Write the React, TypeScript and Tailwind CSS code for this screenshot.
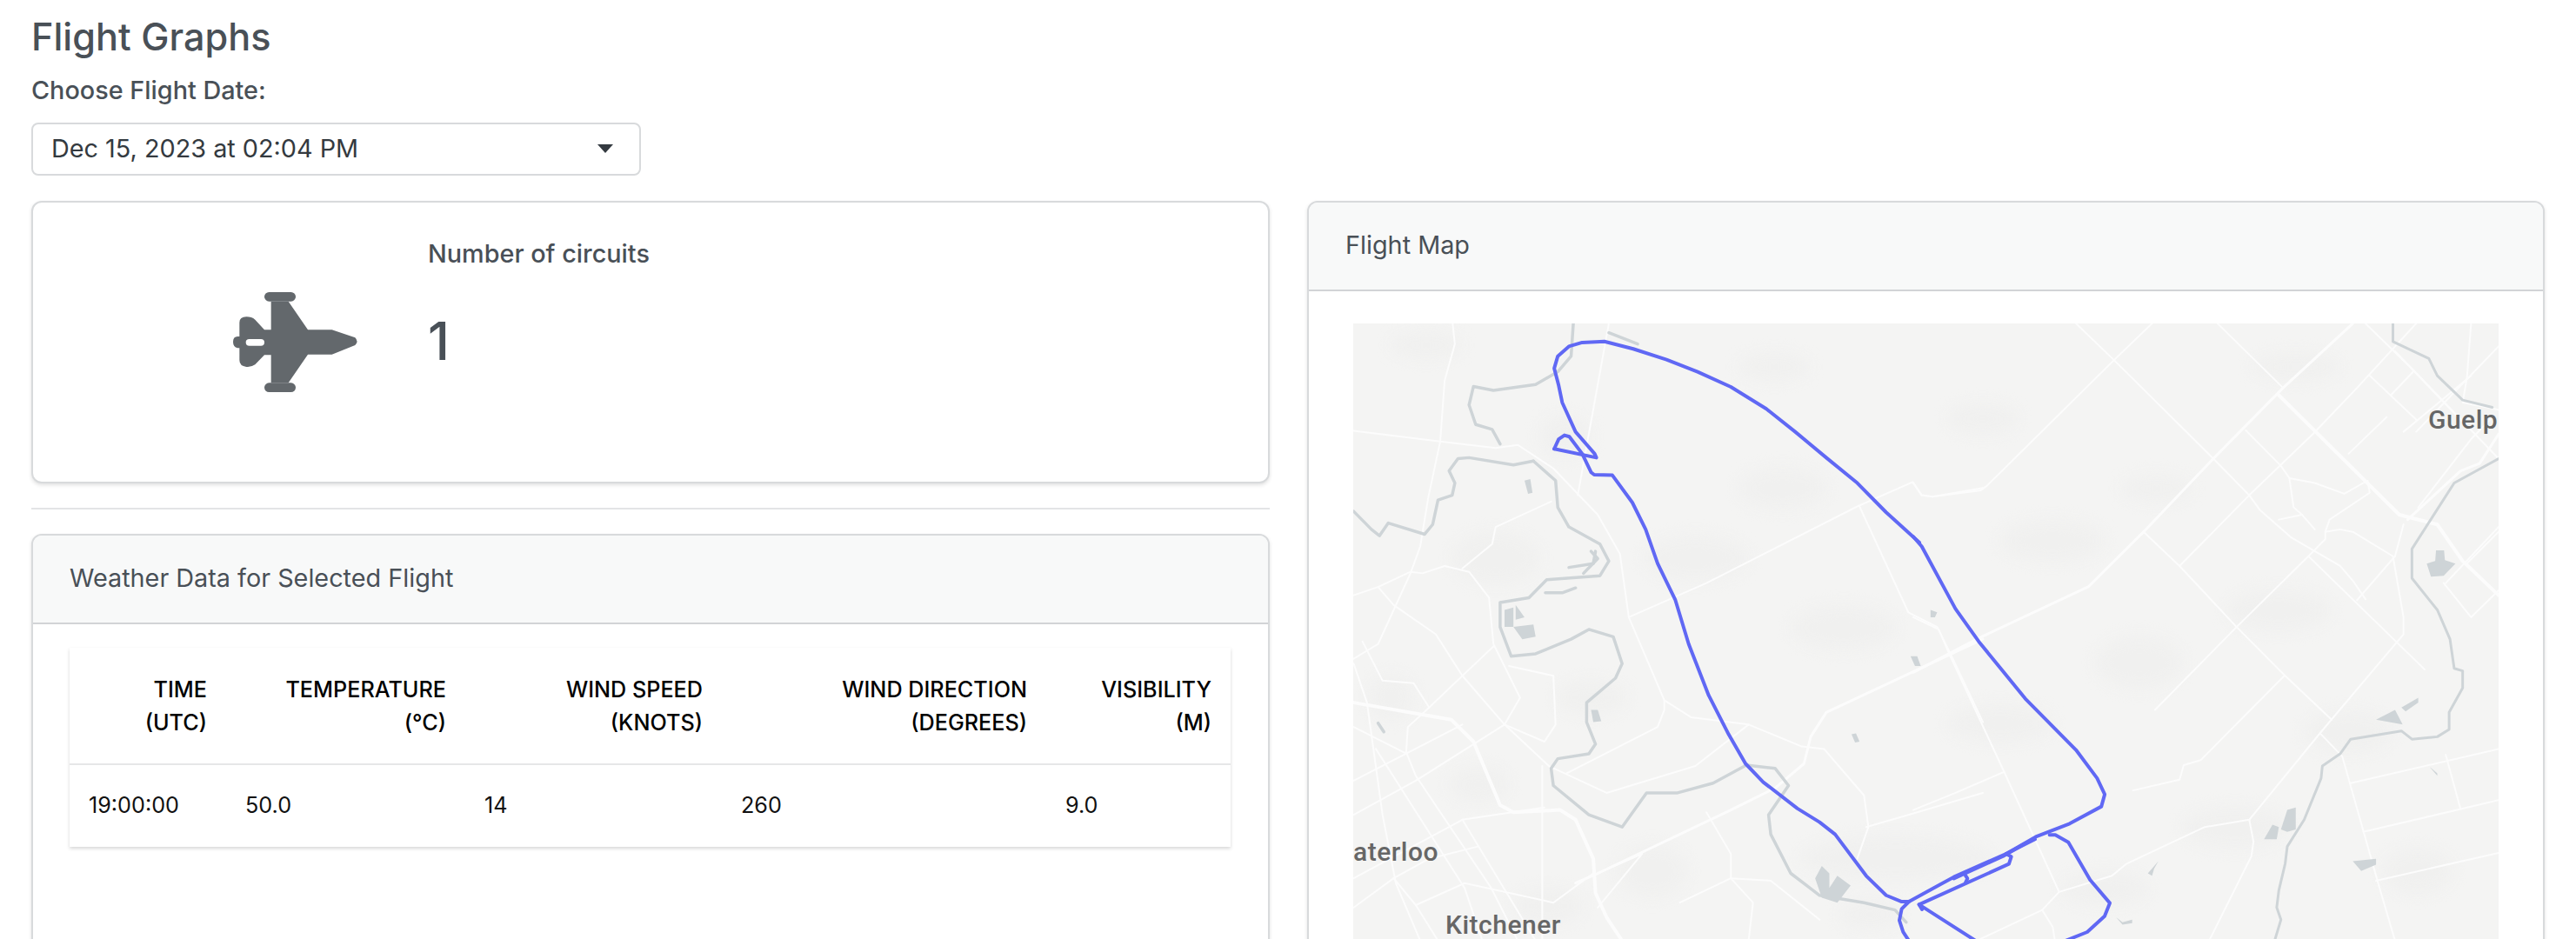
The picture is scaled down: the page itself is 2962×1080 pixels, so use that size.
import React from 'react';

// map data is traced in three different crops, each with its own scale
const Z4 = 'translate(1480 200) scale(0.5102 0.5612)';
const Z5 = 'translate(2200 200) scale(0.4859 0.5612)';
const Z8 = 'translate(2050 900) scale(0.3333 0.3333)';

const thinRoadsA = [
    '373,303 378,345 355,420 345,545 318,660 300,760 278,815 205,960 150,990',
    '150,523 345,545 470,558 520,552 600,600 700,695 750,775 770,905 850,1075 850,1095 835,1130 630,1225',
    '725,303 655,655',
    '595,668 470,720 462,755 395,805',
    '150,860 205,843 278,812 305,815 355,800 410,812 455,865 465,960 525,1070 490,1125 290,1240 150,1310',
    '205,843 240,880 335,940 395,1025 490,1125 590,1210 720,1265 920,1210 1040,1125 1160,1170 1210,1175 1300,1270 1310,1335 1285,1400',
    '770,905 945,835 1285,678 1410,628 1430,655 1455,658 1568,640',
    '1290,678 1400,895 1465,925 1495,980 1568,1120',
    '850,1075 910,1110 1040,1125',
    '465,965 395,1025 320,1090 272,1130 268,1185',
    '500,1005 600,1025 605,1125 580,1160 490,1125',
    '170,955 215,1035 285,1040 320,1090',
    '150,1000 180,1080 215,1310 245,1450 300,1568',
    '575,1210 575,1568',
    '150,1240 395,1125',
    '150,1440 395,1320 580,1295',
    '395,1320 560,1568',
    '945,1305 1000,1390 1000,1440 1050,1490 1040,1568',
    '150,1130 270,1185 290,1230 460,1460 520,1568',
    '200,1175 400,1460 440,1568',
    '240,1440 290,1495 400,1450 600,1490 690,1430',
    '290,1495 340,1568',
    '150,1500 240,1440 320,1400 430,1375',
    '650,1450 800,1390 700,1500',
    '1305,1335 1400,1310 1568,1265',
    '885,1490 1000,1440 1090,1445 1200,1525',
];

const wideRoadsA = [
    { pts: '1568,950 1215,1100 1180,1150 1165,1205 1100,1255 1000,1300 700,1430 650,1450', w: 3 },
    { pts: '150,1080 370,1115 420,1160 480,1290 510,1305 615,1300 650,1320 690,1400 695,1470 720,1520 755,1568', w: 4 },
];

const thinRoadsB = [
    '385,303 475,378 710,580 795,655 820,685 895,742 1010,800 1040,830 1070,868',
    '565,303 475,378 175,635 160,645 45,658 20,655 0,630',
    '720,303 875,435',
    '1070,303 1185,400 1385,580',
    '1190,303 1050,435 945,530 795,655 630,800',
    '545,730 630,800 765,925 880,1025 990,1115',
    '572,1095 765,925 935,780 975,745 975,730 1010,725 1040,730 1135,780 1160,905 1160,940 965,1140 795,1320 690,1335 505,1410 470,1435 345,1468 305,1505 150,1568',
    '935,780 1210,1012',
    '878,1025 680,1198 640,1208 630,1238 520,1260',
    '965,1145 1015,1190 1100,1450 1140,1568',
    '1035,1245 1385,1175',
    '1065,1345 1385,1280',
    '1095,1445 1385,1388',
    '1260,1187 1295,1298',
    '795,1320 805,1365 800,1395 700,1568',
    '0,1300 100,1265 215,1222',
    '0,905 60,930 85,980 215,1222 345,1468',
    '305,1505 330,1540 335,1568',
    '787,522 870,595 890,620 900,680 920,695 865,705',
    '890,620 950,630 1020,652 1075,625 1080,650 985,705 975,730',
    '920,695 950,725',
    '1320,303 1310,415 1300,465 1385,480',
    '1140,360 1300,505',
    '1080,410 1190,500',
    '1190,525 1385,350',
    '1130,450 1185,400',
    '1160,525 1320,410',
    '1195,680 1320,540 1365,500',
    '1385,860 1310,795 1385,730',
    '1255,835 1320,905 1385,850',
    '1140,780 1050,870',
    '1140,780 1160,715',
    '1260,835 1385,720',
    '1030,570 1120,495',
];

const wideRoadsB = [
    { pts: '1040,303 875,435 710,580 545,730 415,842 150,950 0,1018', w: 3 },
    { pts: '865,450 1150,695 1240,715 1300,790 1385,860', w: 4 },
    { pts: '1170,705 1295,605 1340,590 1385,530', w: 3 },
];

const riversA = [
    '645,303 640,370 610,402 560,428 465,440 420,432 410,470 425,510 462,520 480,550',
    '555,585 510,593 410,578 385,580 365,605 378,630 372,655 340,665 328,715 310,735 228,712 208,738 190,725 150,688',
    '555,585 605,625 610,680 635,720 705,755 725,790 705,820 585,828 545,865 480,875 480,925 505,985 560,980 640,950 680,930 735,945 755,1000 740,1030 675,1080 675,1120 695,1165 680,1185 610,1195 595,1215 600,1250 680,1310 755,1335 810,1265 880,1265 960,1245 1035,1208 1100,1215 1130,1250 1085,1310 1090,1350 1135,1430 1200,1475 1300,1490 1370,1505 1395,1530',
    '635,803 690,795 695,770',
    '668,815 700,785 685,770',
    '582,855 620,855 650,845',
    '725,322 790,345',
    '205,1122 218,1140',
];

const riversB = [
    '1135,303 1135,340 1220,375 1240,410 1300,460 1370,475',
    '1385,580 1280,630 1180,765 1180,825 1240,890 1270,950 1280,1010 1300,1015 1300,1050 1268,1100 1268,1135 1240,1150 1180,1155 1155,1138 1035,1155 1010,1185 968,1210 965,1235 925,1320 885,1375 880,1410 865,1465 860,1500 870,1525 855,1568',
];

const waterA = [
    '535,625 548,622 553,650 543,652',
    '490,890 510,885 510,925 490,925',
    '515,880 535,905 515,910',
    '510,925 555,920 560,945 530,950',
    '685,1095 700,1095 708,1118 690,1120',
    '1405,985 1420,985 1428,1005 1415,1005',
    '1272,1145 1282,1143 1290,1160 1280,1162',
    '1450,890 1465,895 1460,905 1450,905',
    '1190,1440 1205,1415 1222,1430 1222,1460 1240,1435 1270,1455 1240,1490 1205,1480',
];

const waterB = [
    '1215,795 1235,790 1237,768 1256,768 1258,788 1283,795 1255,820 1225,822',
    '870,1340 885,1300 905,1295 905,1340 885,1345',
    '830,1360 850,1330 865,1335 860,1360',
    '1095,1115 1140,1095 1158,1125',
    '1155,1090 1195,1070 1195,1080 1165,1098',
    '1040,1405 1095,1400 1095,1412 1060,1425',
    '555,1430 580,1405 570,1420 565,1435',
    '480,1520 495,1530 518,1525 518,1532 495,1535',
    '1222,1212 1240,1225 1240,1230',
];

// soft patches of darker land, x y rx ry in page pixels
const patches = [
    [1640, 395, 40, 16], [1800, 500, 30, 24], [1950, 640, 60, 26], [1720, 640, 50, 30], [1830, 800, 40, 20],
    [2050, 560, 50, 24], [2120, 720, 60, 26], [2280, 480, 40, 18], [2360, 620, 60, 24], [2480, 560, 40, 16],
    [2460, 760, 50, 30], [2300, 830, 60, 22], [2620, 700, 60, 24], [2700, 840, 50, 24], [2570, 950, 60, 24],
    [2180, 985, 110, 26], [1900, 1000, 40, 30], [1700, 900, 34, 20], [1600, 800, 26, 26], [2780, 1000, 40, 26],
    [2420, 1020, 50, 20], [2040, 420, 40, 16], [2640, 420, 50, 16], [1780, 1040, 40, 20], [2150, 1050, 34, 18],
];

const Line = ({ pts, t, w, color }: { pts: string; t: string; w: number; color: string }) => (
    <polyline
        points={pts}
        transform={t}
        fill="none"
        stroke={color}
        strokeWidth={w}
        strokeLinejoin="round"
        strokeLinecap="round"
        vectorEffect="non-scaling-stroke"
    />
);

const FlightMap = () => {
    const road = '#fcfcfc';
    const river = '#ced4d7';
    const track = '#6068f4';
    return (
        <svg viewBox="1556 370 1317 710" className="block w-[1317px] h-[710px] bg-[#f4f4f3]">
            <g className="blur-[8px]">
                {patches.map(([x, y, rx, ry], i) => (
                    <ellipse key={i} cx={x} cy={y} rx={rx} ry={ry} fill="#f0f0ef" />
                ))}
            </g>

            {thinRoadsA.map((p, i) => <Line key={i} pts={p} t={Z4} w={2} color={road} />)}
            {wideRoadsA.map((r, i) => <Line key={i} pts={r.pts} t={Z4} w={r.w} color={road} />)}
            {thinRoadsB.map((p, i) => <Line key={i} pts={p} t={Z5} w={2} color={road} />)}
            {wideRoadsB.map((r, i) => <Line key={i} pts={r.pts} t={Z5} w={r.w} color={road} />)}

            {riversA.map((p, i) => <Line key={i} pts={p} t={Z4} w={3.5} color={river} />)}
            {riversB.map((p, i) => <Line key={i} pts={p} t={Z5} w={3} color={river} />)}
            {waterA.map((p, i) => <polygon key={i} points={p} transform={Z4} fill={river} />)}
            {waterB.map((p, i) => <polygon key={i} points={p} transform={Z5} fill={river} />)}

            <g fill="#666666" fontFamily="Roboto, sans-serif" fontWeight={500} fontSize={30} letterSpacing={0.5}>
                <text x={1556} y={988}>aterloo</text>
                <text x={1662} y={1072}>Kitchener</text>
                <text x={2792} y={491}>Guelp</text>
            </g>

            {/* flight track */}
            <Line t={Z4} w={4} color={track} pts="602,560 612,540 625,532 636,535 665,570 685,608 692,613 733,614 778,670 808,725 835,795 875,870 905,960 950,1065 995,1145 1033,1205 1073,1243 1150,1297 1200,1325 1235,1350 1305,1435 1350,1475 1385,1488 1400,1488" />
            <Line t={Z4} w={4} color={track} pts="602,560 697,578 693,570 650,525 620,465 612,430 602,395 610,370 635,350 665,342 715,340 780,355 855,377 925,402 1000,433 1080,478 1145,525 1215,578 1285,630 1350,690 1425,752" />
            <Line t={Z5} w={4} color={track} pts="0,740 20,760 100,888 155,955 265,1072 385,1177 435,1235 453,1268 445,1293 370,1328 290,1355 220,1390" />
            <Line t={Z8} w={4} color={track} pts="435,405 590,320 770,240 870,190" />
            <Line t={Z8} w={4} color={track} pts="590,325 760,248 830,208" />
            <Line t={Z8} w={4} color={track} pts="435,405 410,430 402,470 415,510 435,540" />
            <Line t={Z8} w={4} color={track} pts="470,415 780,275 788,250 770,240" />
            <Line t={Z8} w={4} color={track} pts="630,315 637,325 630,340" />
            <Line t={Z8} w={4} color={track} pts="480,432 470,415 665,540" />
            <Line t={Z8} w={4} color={track} pts="920,175 940,175 985,200 1060,330 1128,410 1110,455 1050,510 975,540" />
        </svg>
    );
};

const JetIcon = () => (
    <svg viewBox="0 0 660 480" className="block w-[220px] h-[160px] shrink-0">
        <g fill="#63686c">
            <rect x="222" y="75" width="108" height="32" rx="16" />
            <rect x="222" y="388" width="108" height="32" rx="16" />
            <path
                fillRule="evenodd"
                d="M245 107H305L372 205H455L535 232Q548 245 535 258L455 290H372L305 388H245V292H222L190 325Q175 335 160 333Q136 330 136 310V268H130Q114 265 114 247Q114 228 130 228H136V180Q136 160 160 160Q178 160 190 170L222 205H245ZM170 237Q158 237 158 248Q158 260 170 260H210Q222 260 222 248Q222 237 210 237Z"
            />
        </g>
    </svg>
);

const cardClass = 'rounded-[12px] border-2 border-[#d8dadc] bg-white shadow-[0_2px_4px_rgba(0,0,0,0.12)]';
const cardHeaderClass = 'h-[102px] flex items-center pb-[2px] border-b-2 border-[#d2d4d6] bg-[#f8f9f9] rounded-t-[10px] text-[28.8px] text-[#495057]';

const headers = [
    { a: 'TIME', b: '(UTC)', w: 'w-[180px]' },
    { a: 'TEMPERATURE', b: '(°C)', w: 'w-[275px]' },
    { a: 'WIND SPEED', b: '(KNOTS)', w: 'w-[295px]' },
    { a: 'WIND DIRECTION', b: '(DEGREES)', w: 'w-[373px]' },
    { a: 'VISIBILITY', b: '(M)', w: 'w-[212px]' },
];

const cells = ['19:00:00', '50.0', '14', '260', '9.0'];

const App: React.FC = () => {
    return (
        <div className="h-[1080px] overflow-hidden bg-white px-[36px] font-['Inter',sans-serif]">
            <h1 className="pt-[18px] text-[43.2px] leading-[48px] font-medium text-[#495057]">Flight Graphs</h1>
            <p className="mt-[21px] text-[28.8px] leading-[34px] font-medium text-[#495057]">Choose Flight Date:</p>

            {/* date select */}
            <div className="mt-[20px] flex h-[61px] w-[701px] items-center justify-between rounded-[8px] border-2 border-[#d8dadc] pb-[2px] pl-[21px] pr-[30px] text-[28.8px] text-[#343a40]">
                <span>Dec 15, 2023 at 02:04 PM</span>
                <span className="h-0 w-0 border-x-[9px] border-t-[10px] border-x-transparent border-t-[#343a40]"></span>
            </div>

            <div className="mt-[29px] grid grid-cols-[1424px_1423px] gap-[43px]">
                <div>
                    <div className={`${cardClass} flex h-[325px] pl-[192px]`}>
                        <div className="mt-[78px]">
                            <JetIcon />
                        </div>
                        <div className="ml-[42px]">
                            <p className="mt-[42px] text-[28.8px] leading-[34px] font-medium text-[#495057]">Number of circuits</p>
                            <p className="mt-[48px] text-[60px] leading-[70px] font-medium text-[#495057]">1</p>
                        </div>
                    </div>

                    <hr className="mt-[28px] border-t-2 border-[#e3e4e6]" />

                    <div className={`${cardClass} mt-[28px] h-[600px]`}>
                        <div className={`${cardHeaderClass} pl-[42px]`}>Weather Data for Selected Flight</div>
                        <div className="px-[42px] pt-[27px]">
                            {/* weather table */}
                            <table className="w-[1335px] table-fixed bg-white text-left shadow-[0_2px_4px_rgba(0,0,0,0.16)]">
                                <thead>
                                    <tr className="h-[134px] border-b-2 border-[#e6e7e8]">
                                        {headers.map((h) => (
                                            <th key={h.a} className={`${h.w} pr-[22px] text-right text-[25.2px] leading-[38px] font-medium text-black`}>
                                                {h.a}
                                                <br />
                                                {h.b}
                                            </th>
                                        ))}
                                    </tr>
                                </thead>
                                <tbody>
                                    <tr className="h-[95px]">
                                        {cells.map((c) => (
                                            <td key={c} className="pl-[22px] text-[25.2px] text-[#111111]">{c}</td>
                                        ))}
                                    </tr>
                                </tbody>
                            </table>
                        </div>
                    </div>
                </div>

                <div className={`${cardClass} h-[900px]`}>
                    <div className={`${cardHeaderClass} pl-[42px]`}>Flight Map</div>
                    <div className="pl-[51px] pt-[37px]">
                        <FlightMap />
                    </div>
                </div>
            </div>
        </div>
    );
};

export default App;
